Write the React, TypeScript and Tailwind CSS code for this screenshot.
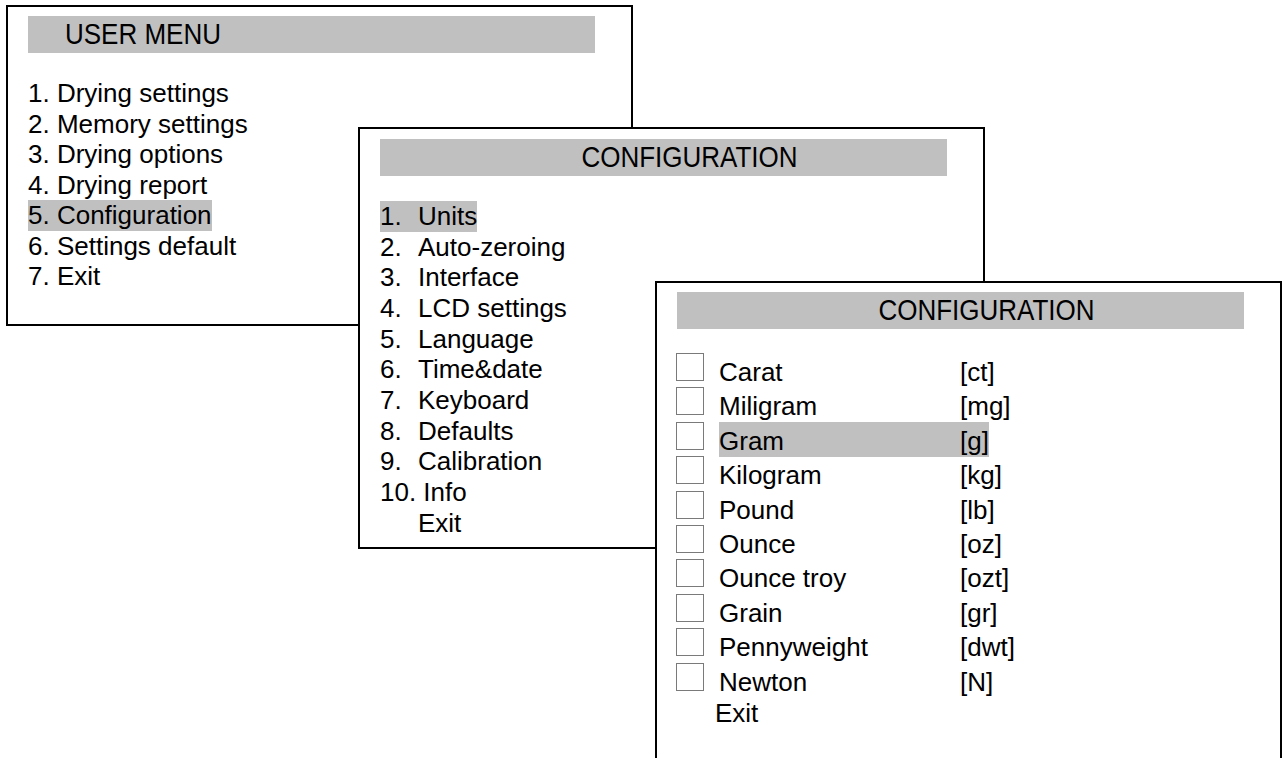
import React from "react";

const userMenu = [
  "1. Drying settings",
  "2. Memory settings",
  "3. Drying options",
  "4. Drying report",
  "5. Configuration",
  "6. Settings default",
  "7. Exit",
];

const configItems = [
  { no: "1.", label: "Units" },
  { no: "2.", label: "Auto-zeroing" },
  { no: "3.", label: "Interface" },
  { no: "4.", label: "LCD settings" },
  { no: "5.", label: "Language" },
  { no: "6.", label: "Time&date" },
  { no: "7.", label: "Keyboard" },
  { no: "8.", label: "Defaults" },
  { no: "9.", label: "Calibration" },
];

const units = [
  { name: "Carat", unit: "[ct]" },
  { name: "Miligram", unit: "[mg]" },
  { name: "Gram", unit: "[g]" },
  { name: "Kilogram", unit: "[kg]" },
  { name: "Pound", unit: "[lb]" },
  { name: "Ounce", unit: "[oz]" },
  { name: "Ounce troy", unit: "[ozt]" },
  { name: "Grain", unit: "[gr]" },
  { name: "Pennyweight", unit: "[dwt]" },
  { name: "Newton", unit: "[N]" },
];

const Header: React.FC<{ title: string; centered?: boolean }> = ({ title, centered }) => (
  <div
    className={
      centered
        ? "ml-[20px] h-[37px] w-[567px] bg-[#c0c0c0] pl-[52px] text-center text-[26px] leading-[37px]"
        : "ml-[20px] h-[37px] w-[567px] bg-[#c0c0c0] pl-[37px] text-[26px] leading-[37px]"
    }
  >
    {/* title text is drawn taller than wide in the reference */}
    <span className="inline-block scale-y-[1.14]">{title}</span>
  </div>
);

const App: React.FC = () => {
  return (
    <div className="relative h-[758px] w-[1282px] overflow-hidden bg-white font-['Liberation_Sans',Arial,sans-serif] text-[26px] text-black">
      {/* User menu window */}
      <div className="absolute left-[6px] top-[5px] h-[321px] w-[627px] border-2 border-black bg-white">
        <div className="mt-[9px]">
          <Header title="USER MENU" />
        </div>
        <div className="ml-[20px] mt-[25px] flex flex-col items-start leading-[30.5px]">
          {userMenu.map((item) => (
            <span key={item} className={item.startsWith("5.") ? "bg-[#c0c0c0]" : ""}>
              {item}
            </span>
          ))}
        </div>
      </div>

      {/* Configuration window */}
      <div className="absolute left-[358px] top-[127px] h-[422px] w-[627px] border-2 border-black bg-white">
        <div className="mt-[10px]">
          <Header title="CONFIGURATION" centered />
        </div>
        <div className="ml-[20px] mt-[25px] flex flex-col items-start leading-[30.65px]">
          {configItems.map((item, i) => (
            <div key={item.no} className={i === 0 ? "flex bg-[#c0c0c0]" : "flex"}>
              <span className="w-[38px]">{item.no}</span>
              <span>{item.label}</span>
            </div>
          ))}
          <span>10. Info</span>
          <span className="ml-[38px]">Exit</span>
        </div>
      </div>

      {/* Units window */}
      <div className="absolute left-[655px] top-[281px] h-[520px] w-[627px] border-2 border-black bg-white">
        <div className="mt-[9px]">
          <Header title="CONFIGURATION" centered />
        </div>
        <div className="ml-[19px] mt-[24px] flex flex-col">
          {units.map((u) => (
            <div key={u.name} className="flex h-[34.4px] items-start">
              <div className="h-[28px] w-[28px] shrink-0 border border-[#7a7a7a]" />
              <div
                className={
                  u.name === "Gram"
                    ? "ml-[15px] flex h-[35px] bg-[#c0c0c0] pt-[2px] leading-[34px]"
                    : "ml-[15px] flex h-[35px] pt-[2px] leading-[34px]"
                }
              >
                <span className="w-[241px] shrink-0">{u.name}</span>
                <span className="shrink-0">{u.unit}</span>
              </div>
            </div>
          ))}
          <span className="ml-[39px] mt-[1px] leading-[30px]">Exit</span>
        </div>
      </div>
    </div>
  );
};

export default App;
